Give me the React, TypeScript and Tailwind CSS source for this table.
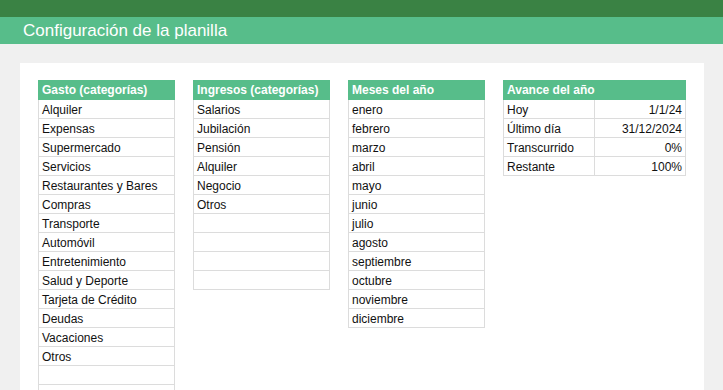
import React from "react";

const gastos = [
  "Alquiler",
  "Expensas",
  "Supermercado",
  "Servicios",
  "Restaurantes y Bares",
  "Compras",
  "Transporte",
  "Automóvil",
  "Entretenimiento",
  "Salud y Deporte",
  "Tarjeta de Crédito",
  "Deudas",
  "Vacaciones",
  "Otros",
  "",
  "",
];

const ingresos = ["Salarios", "Jubilación", "Pensión", "Alquiler", "Negocio", "Otros", "", "", "", ""];

const meses = [
  "enero",
  "febrero",
  "marzo",
  "abril",
  "mayo",
  "junio",
  "julio",
  "agosto",
  "septiembre",
  "octubre",
  "noviembre",
  "diciembre",
];

const avance: [string, string][] = [
  ["Hoy", "1/1/24"],
  ["Último día", "31/12/2024"],
  ["Transcurrido", "0%"],
  ["Restante", "100%"],
];

function Header({ title }: { title: string }) {
  return (
    <div className="h-[20px] bg-[#57bd8a] px-[4px] flex items-center text-white font-bold text-[12px]">
      {title}
    </div>
  );
}

function ListTable({ title, items }: { title: string; items: string[] }) {
  return (
    <div className="w-[137px] shrink-0">
      <Header title={title} />
      {items.map((it, i) => (
        <div
          key={i}
          className="h-[19px] border-x border-b border-[#dcdcdc] px-[3px] pt-[1px] flex items-center text-[12px] text-[#111]"
        >
          {it}
        </div>
      ))}
    </div>
  );
}

export default function App() {
  return (
    <div
      className="w-[723px] h-[390px] overflow-hidden bg-[#f0f0f0] flex flex-col"
      style={{ fontFamily: '"Liberation Sans", Arial, Helvetica, sans-serif' }}
    >
      <div className="h-[17px] bg-[#3a8244] shrink-0" />
      <div className="h-[27px] bg-[#57bd8a] shrink-0 flex items-center pl-[23px] text-white text-[17px]">
        Configuración de la planilla
      </div>
      <div className="mt-[19px] ml-[20px] w-[684px] flex-1 bg-white flex gap-[18px] px-[18px] pt-[17px] overflow-hidden">
        <ListTable title="Gasto (categorías)" items={gastos} />
        <ListTable title="Ingresos (categorías)" items={ingresos} />
        <ListTable title="Meses del año" items={meses} />
        <div className="w-[183px] shrink-0">
          <Header title="Avance del año" />
          {avance.map(([k, v]) => (
            <div
              key={k}
              className="h-[19px] border-x border-b border-[#dcdcdc] flex text-[12px] text-[#111]"
            >
              <div className="w-[91px] border-r border-[#dcdcdc] px-[3px] pt-[1px] flex items-center">{k}</div>
              <div className="flex-1 px-[3px] pt-[1px] flex items-center justify-end">{v}</div>
            </div>
          ))}
        </div>
      </div>
    </div>
  );
}
